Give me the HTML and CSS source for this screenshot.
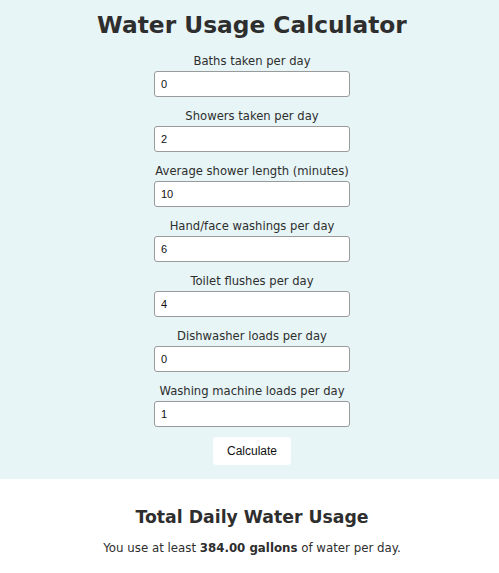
FILE: index.html
```html
<!DOCTYPE html>
<html>
<head>
<meta charset="utf-8">
<link rel="stylesheet" href="styles.css">
</head>
<body>
<section class="calc">
  <h1 class="title">Water Usage Calculator</h1>
  <div class="field"><label class="lbl">Baths taken per day</label><input class="inp" type="text" value="0"></div>
  <div class="field"><label class="lbl">Showers taken per day</label><input class="inp" type="text" value="2"></div>
  <div class="field"><label class="lbl">Average shower length (minutes)</label><input class="inp" type="text" value="10"></div>
  <div class="field"><label class="lbl">Hand/face washings per day</label><input class="inp" type="text" value="6"></div>
  <div class="field"><label class="lbl">Toilet flushes per day</label><input class="inp" type="text" value="4"></div>
  <div class="field"><label class="lbl">Dishwasher loads per day</label><input class="inp" type="text" value="0"></div>
  <div class="field"><label class="lbl">Washing machine loads per day</label><input class="inp" type="text" value="1"></div>
  <button class="btn" type="button">Calculate</button>
</section>
<section class="result">
  <h2 class="rtitle">Total Daily Water Usage</h2>
  <p class="rtext">You use at least <b>384.00 gallons</b> of water per day.</p>
</section>
</body>
</html>
```
FILE: styles.css
```css
html, body {
  margin: 0;
  padding: 0;
  background: #ffffff;
  font-family: "DejaVu Sans", Verdana, sans-serif;
  color: #2e2e2e;
}
.calc {
  background: #e7f5f6;
  display: flex;
  flex-direction: column;
  align-items: center;
  padding: 10px 0 14px 5px;
}
.title {
  font-size: 23.3px;
  line-height: 30px;
  margin: 0 0 13px;
  font-weight: bold;
}
.field {
  display: flex;
  flex-direction: column;
  align-items: center;
  margin-bottom: 11px;
}
.lbl {
  font-size: 11.6px;
  line-height: 16px;
  margin-bottom: 2px;
}
.inp {
  box-sizing: border-box;
  width: 196px;
  height: 26px;
  border: 1px solid #9a9a9a;
  border-radius: 3px;
  padding: 0 6px;
  font-family: "Liberation Sans", Arial, sans-serif;
  font-size: 11px;
  color: #111;
  background: #fff;
}
.btn {
  margin-top: -1px;
  width: 78px;
  height: 28px;
  border: none;
  border-radius: 4px;
  background: #fff;
  font-family: "Liberation Sans", Arial, sans-serif;
  font-size: 12px;
  color: #111;
}
.result {
  text-align: center;
  padding: 26px 0 0 5px;
}
.rtitle {
  font-size: 17.3px;
  line-height: 24px;
  margin: 0 0 11px;
  font-weight: bold;
}
.rtext {
  font-size: 11.8px;
  line-height: 16px;
  margin: 0;
}
```
